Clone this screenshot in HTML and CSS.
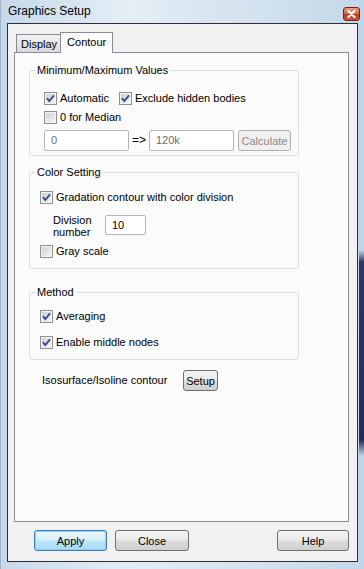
FILE: index.html
```html
<!DOCTYPE html>
<html lang="en">
<head>
  <meta charset="UTF-8" />
  <title>Graphics Setup</title>
  <link rel="stylesheet" href="styles.css">
</head>
<body>
  <div class="window">
    <div class="titlebar">
      <span class="title">Graphics Setup</span>
      <span class="close-x">
        <svg width="9" height="8" viewBox="0 0 9 8"><path d="M1.5 1 L7.5 7 M7.5 1 L1.5 7" stroke="#fff" stroke-width="2.2" stroke-linecap="round"/></svg>
      </span>
    </div>

    <div class="client">
      <div class="tabs">
        <div class="tab">Display</div>
        <div class="tab active">Contour</div>
      </div>

      <div class="panel">
        <!-- Minimum/Maximum -->
        <div class="group group-minmax">
          <span class="group-title">Minimum/Maximum Values</span>
          <div class="row">
            <label class="check first-col">
              <span class="box"><svg width="11" height="11" viewBox="0 0 11 11"><path d="M2 5.2 L4.3 8 L9 2.3" fill="none" stroke="#3a4a8c" stroke-width="1.9"/></svg></span>
              Automatic
            </label>
            <label class="check">
              <span class="box"><svg width="11" height="11" viewBox="0 0 11 11"><path d="M2 5.2 L4.3 8 L9 2.3" fill="none" stroke="#3a4a8c" stroke-width="1.9"/></svg></span>
              Exclude hidden bodies
            </label>
          </div>
          <div class="row gap6">
            <label class="check"><span class="box"></span>0 for Median</label>
          </div>
          <div class="row range gap6">
            <span class="textbox disabled">0</span>
            <span class="arrow">=&gt;</span>
            <span class="textbox disabled">120k</span>
            <button class="btn calc" disabled>Calculate</button>
          </div>
        </div>

        <!-- Color Setting -->
        <div class="group group-color">
          <span class="group-title">Color Setting</span>
          <label class="check">
            <span class="box"><svg width="11" height="11" viewBox="0 0 11 11"><path d="M2 5.2 L4.3 8 L9 2.3" fill="none" stroke="#3a4a8c" stroke-width="1.9"/></svg></span>
            Gradation contour with color division
          </label>
          <div class="division">
            <span class="division-label">Division<br>number</span>
            <span class="textbox small">10</span>
          </div>
          <label class="check gray-row"><span class="box"></span>Gray scale</label>
        </div>

        <!-- Method -->
        <div class="group group-method">
          <span class="group-title">Method</span>
          <label class="check">
            <span class="box"><svg width="11" height="11" viewBox="0 0 11 11"><path d="M2 5.2 L4.3 8 L9 2.3" fill="none" stroke="#3a4a8c" stroke-width="1.9"/></svg></span>
            Averaging
          </label>
          <label class="check second">
            <span class="box"><svg width="11" height="11" viewBox="0 0 11 11"><path d="M2 5.2 L4.3 8 L9 2.3" fill="none" stroke="#3a4a8c" stroke-width="1.9"/></svg></span>
            Enable middle nodes
          </label>
        </div>

        <div class="iso-row">
          <span class="iso-label">Isosurface/Isoline contour</span>
          <button class="btn setup">Setup</button>
        </div>
      </div>

      <div class="actions">
        <button class="btn default">Apply</button>
        <button class="btn close">Close</button>
        <button class="btn help">Help</button>
      </div>
    </div>
  </div>
</body>
</html>
```

FILE: styles.css
```css
html, body {
  margin: 0;
  padding: 0;
}

body {
  width: 364px;
  height: 569px;
  overflow: hidden;
  font-family: "Liberation Sans", Arial, sans-serif;
  font-size: 11px;
  line-height: 13px;
  color: #000;
  background:
    linear-gradient(to bottom, #bcd6eb 0, #bcd6eb 250px, #2b3567 262px, #232b5c 440px, #bcd6eb 456px, #bcd6eb 100%) right top / 5px 100% no-repeat,
    linear-gradient(to right, #c6d9ea 0, #e4eef6 35%, #d3e2ee 70%, #c4d8ea 100%);
}

.window {
  box-sizing: border-box;
  height: 569px;
  padding: 0 6px 7px 6px;
  display: flex;
  flex-direction: column;
  border-left: 1px solid #9fb4c8;
}

.titlebar {
  height: 23px;
  display: flex;
  align-items: center;
  justify-content: space-between;
  margin-left: -6px;
  margin-right: -6px;
  padding: 0 4px 0 7px;
  box-sizing: border-box;
}

.title {
  font-size: 12px;
  line-height: 14px;
  margin-top: -2px;
}

.close-x {
  width: 15px;
  height: 12px;
  margin-top: 4px;
  border: 1px solid #6b2416;
  border-radius: 3px;
  background: linear-gradient(to bottom, #e9a08a 0, #d86a4c 45%, #c2391c 55%, #d0573a 100%);
  display: flex;
  align-items: center;
  justify-content: center;
}

.client {
  flex: 1;
  background-color: #f2f1f2;
  border: 1px solid #2e2f36;
  padding: 8px 8px 10px 6px;
  display: flex;
  flex-direction: column;
}

.tabs {
  height: 20px;
  display: flex;
  align-items: flex-end;
  padding-left: 2px;
}

.tab {
  box-sizing: border-box;
  height: 18px;
  padding: 2px 3px 0 4px;
  border: 1px solid #898c95;
  border-bottom: none;
  background: linear-gradient(to bottom, #f2f2f2 0, #e6e6e6 50%, #d9d9d9 100%);
  display: flex;
  align-items: center;
}

.tab.active {
  height: 21px;
  margin-bottom: -1px;
  margin-left: -1px;
  padding: 0 6px 2px 6px;
  background: #fafbfa;
  position: relative;
  z-index: 1;
}

.panel {
  box-sizing: border-box;
  width: 335px;
  height: 470px;
  border: 1px solid #898c95;
  background: #fafbfa;
  padding: 0 0 0 14px;
}

.group {
  position: relative;
  box-sizing: border-box;
  width: 270px;
  border: 1px solid #d5dfe5;
  border-radius: 3px;
}

.group-title {
  position: absolute;
  top: -7px;
  left: 5px;
  padding: 0 2px;
  background: #fafbfa;
}

.group-minmax {
  margin-top: 17px;
  padding: 21px 0 4px 14px;
}

.group-color {
  margin-top: 16px;
  padding: 18px 0 10px 10px;
}

.group-method {
  margin-top: 23px;
  padding: 17px 0 10px 10px;
}

.row {
  display: flex;
  align-items: center;
}

.gap6 {
  margin-top: 6px;
}

.check {
  display: flex;
  align-items: center;
  gap: 3px;
  height: 13px;
}

.first-col {
  width: 75px;
}

.box {
  box-sizing: border-box;
  width: 13px;
  height: 13px;
  border: 1px solid #8e8f8f;
  background: linear-gradient(135deg, #c9ccd1 0, #e2e3e5 50%, #f6f6f6 100%);
  box-shadow: inset 0 0 0 1px #f4f4f4;
  display: flex;
  align-items: center;
  justify-content: center;
}

.box svg {
  display: block;
}

.textbox {
  box-sizing: border-box;
  width: 85px;
  height: 21px;
  border: 1px solid #b3b5b9;
  border-radius: 2px;
  background: #fff;
  padding-left: 6px;
  display: flex;
  align-items: center;
}

.textbox.disabled {
  color: #6d6d6d;
}

.arrow {
  width: 20px;
  text-align: center;
  font-size: 12px;
}

.btn {
  box-sizing: border-box;
  height: 21px;
  border: 1px solid #707070;
  border-radius: 3px;
  background: linear-gradient(to bottom, #f2f2f2 0, #ebebeb 48%, #dddddd 52%, #cfcfcf 100%);
  font-family: "Liberation Sans", Arial, sans-serif;
  font-size: 11px;
  color: #000;
  padding: 0;
}

.btn.calc {
  width: 53px;
  margin-left: 4px;
  border-color: #aeb1b4;
  background: #f1f0f1;
  color: #8a8a8a;
}

.division {
  display: flex;
  align-items: center;
  margin: 10px 0 0 13px;
  height: 24px;
}

.division-label {
  width: 52px;
  line-height: 12px;
}

.textbox.small {
  width: 41px;
  height: 20px;
  margin-top: -2px;
}

.gray-row {
  margin-top: 7px;
}

.second {
  margin-top: 13px;
}

.iso-row {
  display: flex;
  align-items: center;
  margin: 10px 0 0 13px;
}

.iso-label {
  width: 141px;
}

.btn.setup {
  width: 35px;
}

.actions {
  margin-top: 8px;
  padding: 0 8px 0 20px;
  display: flex;
}

.actions .btn {
  width: 73px;
}

.btn.default {
  border-color: #3c7fb1;
  background: linear-gradient(to bottom, #eaf6fd 0, #d9f0fc 48%, #bee6fd 52%, #a7d9f5 100%);
  box-shadow: inset 0 0 0 1px #8fd0f3;
}

.btn.close {
  width: 74px;
  margin-left: 8px;
}

.btn.help {
  width: 72px;
  margin-left: auto;
  margin-right: -8px;
}
```
